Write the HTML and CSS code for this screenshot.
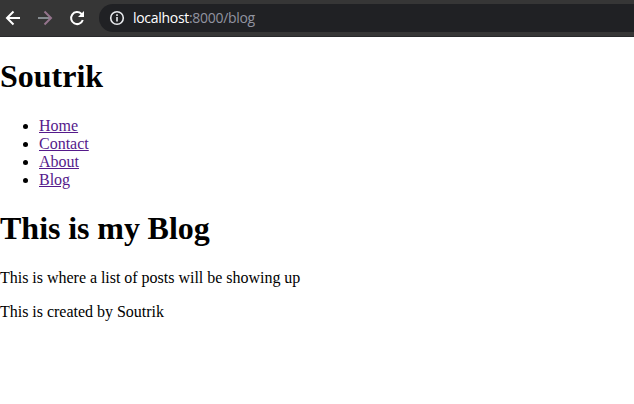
FILE: index.html
```html
<!DOCTYPE html>
<html lang="en">
<head>
<meta charset="utf-8">
<title>Blog</title>
<link rel="stylesheet" href="styles.css">
</head>
<body>
<header class="toolbar">
  <svg class="icon" viewBox="0 0 16 16"><path d="M15 8H2.500M8.500 1.500L2 8L8.500 14.500"/></svg>
  <svg class="icon icon-muted" viewBox="0 0 16 16"><path class="shaft" d="M1 8H13"/><path d="M7.500 1.500L14 8L7.500 14.500"/></svg>
  <svg class="icon" viewBox="0 0 16 16"><path d="M13.800 10A6 6 0 1 1 12.300 3.800L14 5.500"/><path class="solid" d="M15 1V7H9Z"/></svg>
  <div class="address">
    <svg class="info" viewBox="0 0 16 16"><circle cx="8" cy="8" r="6.300"/><path d="M8 7V11.500M8 4.300V5.900"/></svg>
    <span class="url"><span class="host">localhost</span>:8000/blog</span>
  </div>
</header>
<main class="page">
  <h1>Soutrik</h1>
  <ul>
    <li><a href="#">Home</a></li>
    <li><a href="#">Contact</a></li>
    <li><a href="#">About</a></li>
    <li><a href="#">Blog</a></li>
  </ul>
  <h1>This is my Blog</h1>
  <p>This is where a list of posts will be showing up</p>
  <p>This is created by Soutrik</p>
</main>
</body>
</html>
```
FILE: styles.css
```css
body { margin: 0; background: #fff; color: #000; font: 16px/18px "Liberation Serif", serif; overflow: hidden; }
.toolbar { display: flex; align-items: center; height: 37px; background: #363636; border-bottom: 1px solid #28292b; box-sizing: border-box; padding-left: 5px; }
.icon { width: 16px; height: 16px; margin-right: 16px; fill: none; stroke: #fff; stroke-width: 2; flex: none; }
.icon-muted { stroke: #94748c; }
.shaft { stroke: #858b90; }
.solid { fill: #fff; stroke: none; }
.address { display: flex; align-items: center; flex: 1; height: 28px; margin-left: -2px; padding-left: 10px; background: #202124; border-radius: 14px 0 0 14px; }
.info { width: 16px; height: 16px; fill: none; stroke: #e8eaed; stroke-width: 1.6; }
.url { margin-left: 8px; font: 14px/20px "Open Sans", sans-serif; letter-spacing: -0.3px; color: #9194a0; }
.host { color: #fff; }
.page { display: flow-root; }
h1 { margin: 21px 0 22px; font-size: 32px; line-height: 37px; word-spacing: -0.3px; }
ul { margin: 21px 0; padding-left: 39px; }
p { margin: 16px 0; word-spacing: -0.1px; }
a { color: #551a8b; }
```
